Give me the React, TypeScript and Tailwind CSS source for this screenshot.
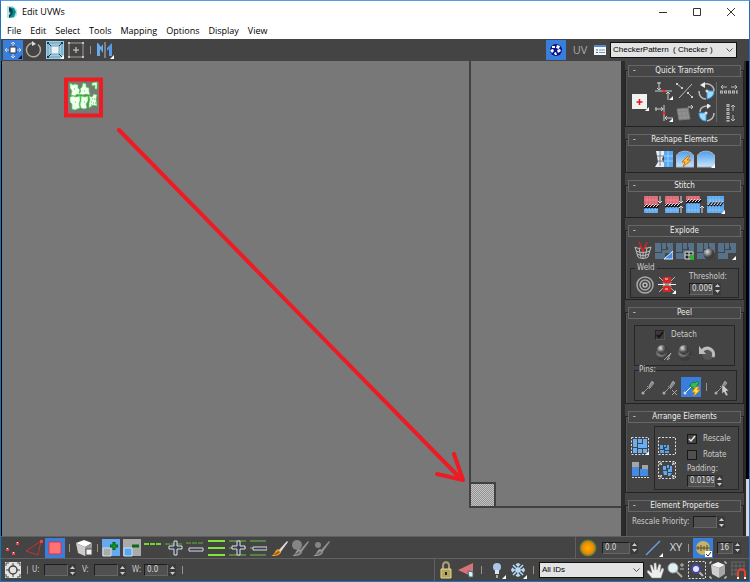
import type { ReactNode } from "react";

type IconProps = { children: ReactNode; w?: number; h?: number };

function Icon({ children, w = 18, h = 18 }: IconProps) {
  return (
    <svg width={w} height={h} viewBox={`0 0 ${w} ${h}`} fill="none" className="block" aria-hidden="true">
      {children}
    </svg>
  );
}

function Tool({ label, children, active = false }: { label: string; children: ReactNode; active?: boolean }) {
  return (
    <button
      type="button"
      aria-label={label}
      className={
        active
          ? "flex size-5 shrink-0 items-center justify-center bg-[#3a7edb]"
          : "flex size-5 shrink-0 items-center justify-center"
      }
    >
      {children}
    </button>
  );
}

function Sep() {
  return <span className="block h-2 w-px shrink-0 bg-[#99938c]" />;
}

// white triangle that marks a flyout button
const Fly = () => <path d="M18 14v4h-4z" fill="#fff" />;

function Field({ label, value, id, width = "w-6" }: { label: string; value: string; id: string; width?: string }) {
  return (
    <div className="flex shrink-0 items-center">
      <input
        id={id}
        aria-label={label}
        defaultValue={value}
        className={`${width} h-3 border border-[#1d1d1d] border-r-[#666] border-b-[#666] bg-[#505050] pl-0.5 text-[8px] text-[#ddd] outline-none`}
      />
      <span className="flex w-2 flex-col bg-[#3a3a3a]">
        <button type="button" aria-label={`${label} up`} className="flex h-1.5 items-center justify-center">
          <svg width="5" height="3" viewBox="0 0 5 3"><path d="M0 3 2.500 0 5 3z" fill="#ccc" /></svg>
        </button>
        <button type="button" aria-label={`${label} down`} className="flex h-1.5 items-center justify-center">
          <svg width="5" height="3" viewBox="0 0 5 3"><path d="M0 0 2.500 3 5 0z" fill="#ccc" /></svg>
        </button>
      </span>
    </div>
  );
}

function Dropdown({ label, value, width }: { label: string; value: string; width: string }) {
  return (
    <div className={`relative shrink-0 ${width}`}>
      <select
        aria-label={label}
        className="block h-4 w-full appearance-none border border-[#111] bg-[#e3e3e3] pl-0.5 font-['Liberation_Sans',sans-serif] text-[8px] text-black outline-none"
      >
        <option>{value}</option>
      </select>
      <svg className="pointer-events-none absolute top-1.5 right-1" width="7" height="5" viewBox="0 0 7 5" fill="none">
        <path d="m.5.5 3 3 3-3" stroke="#555" />
      </svg>
    </div>
  );
}

function Group({ title, children }: { title: string; children: ReactNode }) {
  return (
    <section className="shrink-0 border border-[#222] shadow-[inset_1px_1px_#555]">
      <h2 className="relative mx-0.5 -mt-1.5 h-3 border border-[#666] bg-[#464646] text-center text-[8px] leading-[10px] text-[#eee]">
        <span className="absolute left-1">-</span>
        {title}
      </h2>
      {children}
    </section>
  );
}

/* ---------- canvas ---------- */

function Canvas() {
  return (
    <svg
      className="block h-full w-full"
      viewBox="0 0 619 475"
      preserveAspectRatio="xMinYMin slice"
      fill="none"
      role="img"
      aria-label="UV canvas"
    >
      <defs>
        <pattern id="checker" width="2" height="2" patternUnits="userSpaceOnUse">
          <rect width="2" height="2" fill="#c4c4c4" />
          <path d="M0 0h1v1H0zM1 1h1v1H1z" fill="#929292" />
        </pattern>
      </defs>
      <path d="M468 0v446h152" stroke="#414141" strokeWidth="2" />
      <rect x="468" y="422" width="25" height="24" fill="url(#checker)" stroke="#414141" strokeWidth="2" />

      <g fill="#f4fff4" stroke="#3be83b" strokeWidth=".7">
        <path d="m68 22 3 2 2-1 3 1v3l2 2-1 2 1 3-3-1-2 2-4-1 1-4-2-3z" />
        <path d="m78 28 2-2 1-4 3 1v3l3 1v3l1 4-4-1-3 1-4-1 2-3z" />
        <path d="m90 22 5-1v7h-2v-4l-3 1z" />
        <path d="m68 36 3-1 3 1 4-1v5l-1 3 1 4-3 1-2 1-3-1v-5l-2-2z" />
        <path d="m79 35 4 1 3-1v5l-2 3 1 4-3 1-3-1-1-4 1-3z" />
        <path d="m87 35 3 1 2-3 3 1-1 4 1 7-4-1-4 3v-5l1-3z" />
      </g>
      <path d="M89 41h1M92 38h1M89 44h1M91 42h1M90 38h1M93 42h1M73 41h1M82 41h1M72 28h1M82 30h1" stroke="#35d435" />

      <rect x="64" y="18.500" width="35" height="36" stroke="#ed1c24" strokeWidth="4" />
      <path d="M117 69 459 418M435 413l26 6-9-26" stroke="#ed1c24" strokeWidth="4" strokeLinecap="round" strokeLinejoin="round" />
    </svg>
  );
}

/* ---------- shared drawings ---------- */

function Blocks({ corner }: { corner?: ReactNode }) {
  return (
    <Icon>
      <path d="M0 1h6v9H0zM7 1h4v6H7zM12 1h6v10h-6V8h1V5h-1zM7 8h6v3H7zM0 11h10v6H0z" fill="#56728b" />
      {corner}
    </Icon>
  );
}

function Stitch({ variant }: { variant: number }) {
  const red = variant === 1 ? 9 : variant === 2 ? 8 : variant === 3 ? 4 : 0;
  const width = variant === 4 ? 17 : 14;
  return (
    <Icon>
      <path d={`M0 0h${width}v${red}H0z`} fill="#dc6472" />
      <path d={`M0 ${red + (red ? 3 : 0)}h${width}V17H0z`} fill="#5ba7ef" />
      <path d={`M0 ${red}h${width}v3H0z`} fill={red ? "#392e34" : "#5ba7ef"} />
      <path d={`M3 0v17M6 0v17M9 0v17M12 0v17M0 4h${width}M0 14h${width}`} stroke="#ffffff35" />
      <path
        d={variant === 4 ? "m1 10 3-4m0 4 3-4m0 4 3-4m0 4 3-4m0 4 3-4" : `M0 ${red + 3}l3-3m0 3 3-3m0 3 3-3m0 3 3-3m0 3 3-3`}
        stroke="#111"
        strokeWidth="2"
      />
      <path
        d={variant === 4 ? "m1 9 3-4m0 4 3-4m0 4 3-4m0 4 3-4m0 4 3-4" : `M0 ${red + 2}l3-3m0 3 3-3m0 3 3-3m0 3 3-3m0 3 3-3`}
        stroke="#f8dce0"
      />
      {variant < 3 && <path d="M16 0v7m-2-2 2 2 2-2" stroke="#ddd" />}
      {(variant === 2 || variant === 3) && <path d="M16 17v-7m-2 2 2-2 2 2" stroke="#ddd" />}
      {variant === 4 && <Fly />}
    </Icon>
  );
}

function Pin({ children }: { children?: ReactNode }) {
  return (
    <Icon>
      <path d="m3 15 7-7" stroke="#999" />
      <circle cx="3" cy="15" r="1.500" fill="#aaa" />
      <path d="m7 8 3 3M9 8l4-4M12 3l2 2-4 5-1-2z" stroke="#999" fill="#858585" />
      {children}
    </Icon>
  );
}

function Cube() {
  return (
    <Icon>
      <path d="m2 4 7-3 7 3-6 3z" fill="#f4f4f4" />
      <path d="m2 4 8 3v10l-7-4z" fill="#cfcfcf" />
      <path d="m10 7 6-3v9l-6 4z" fill="#a6a6a6" />
      <path d="M1 3V1h2M15 1h2v2M1 15v2h2M15 17h2v-2" stroke="#ddd" />
    </Icon>
  );
}

function Plus({ x = 9 }: { x?: number }) {
  return <path d={`M${x - 2} 2h3v5h5v3h-5v6h-3v-6h-5V7h5z`} fill="#374154" stroke="#e2e2e2" />;
}

function Head({ arrow = false }: { arrow?: boolean }) {
  return (
    <Icon>
      <circle cx="9" cy="10" r="7" fill="url(#sphere)" />
      <circle cx="8" cy="6" r="5" fill="url(#sphere)" />
      <path d="M3 9c3-2 6-2 8 1s3 3 5 2M9 3l2 4" stroke="#555" />
      {arrow && <path d="m10 16 7-7-4 7 3-2" stroke="#aaa" />}
    </Icon>
  );
}

function Brush({ blob = 0 }: { blob?: number }) {
  return (
    <Icon>
      {blob > 0 && <circle cx="6" cy="6" r={blob} fill="#858585" />}
      <path d="m17 2-9 10 2 2 8-11z" fill={blob ? "#8e8e8e" : "#ded7ce"} />
      <path d="m8 10 3 3c-1 4-6 4-10 4 4-1 3-5 7-7z" fill={blob ? "#a0a0a0" : "#f3a32a"} />
      <path d="M3 16c4 0 6-1 7-3l-2-1z" fill={blob ? "#696969" : "#a65e0f"} />
    </Icon>
  );
}

function Marquee() {
  return <path d="M.5.5h17v17H.5z" stroke="#ddd" strokeDasharray="2 1.500" />;
}

const menus = ["File", "Edit", "Select", "Tools", "Mapping", "Options", "Display", "View"];

export default function App() {
  return (
    <div className="flex h-screen flex-col overflow-hidden border border-[#1874bc] border-t-[#569de5] bg-[#444] font-['DejaVu_Sans_Condensed','DejaVu_Sans',sans-serif] text-[8px] text-[#ccc]">
      <svg width="0" height="0" className="absolute">
        <defs>
          <radialGradient id="sphere" cx="35%" cy="30%">
            <stop stopColor="#ddd" />
            <stop offset="1" stopColor="#3c3c3c" />
          </radialGradient>
          <linearGradient id="sky" x2="0" y2="1">
            <stop stopColor="#4c9eed" />
            <stop offset="1" stopColor="#cbe4fa" />
          </linearGradient>
          <radialGradient id="sun">
            <stop stopColor="#ffae00" />
            <stop offset=".6" stopColor="#f08a00" />
            <stop offset=".8" stopColor="#838b28" />
            <stop offset="1" stopColor="#444" />
          </radialGradient>
        </defs>
      </svg>

      <header className="shrink-0 bg-white font-['Open_Sans',sans-serif] text-[9px] text-black">
        <div className="flex h-[21px] items-center pl-1.5">
          <Icon w={10} h={12}>
            <path d="M0 0h6l4 4v5l-3 3H0z" fill="#b7e5e5" />
            <path d="m2 1 5 1 2 4-2 5-5 1 2-4-2-2 2-2z" fill="#07908e" />
            <path d="m2 1 3 2 1 3-2 1-2-2zM2 12l4-5-1-1-3 3z" fill="#053f50" />
          </Icon>
          <h1 className="ml-[5px]">Edit UVWs</h1>
          <div className="ml-auto flex gap-[14px] pr-2">
            <button type="button" aria-label="Minimize" className="flex size-5 items-center justify-center">
              <Icon w={8} h={8}><path d="M0 4.500h8" stroke="#333" /></Icon>
            </button>
            <button type="button" aria-label="Maximize" className="flex size-5 items-center justify-center">
              <Icon w={8} h={8}><path d="M.5.5h7v7h-7z" stroke="#333" /></Icon>
            </button>
            <button type="button" aria-label="Close" className="flex size-5 items-center justify-center">
              <Icon w={8} h={8}><path d="m0 0 8 8M8 0 0 8" stroke="#333" /></Icon>
            </button>
          </div>
        </div>
        <nav className="flex h-[17px] items-center gap-[9px] pl-1.5">
          {menus.map((menu) => (
            <button key={menu} type="button">{menu}</button>
          ))}
        </nav>
      </header>

      <div className="flex h-[22px] shrink-0 items-center gap-px pl-0.5">
        <Tool label="Move" active>
          <Icon>
            <path d="M9 1v4M7 3l2-2 2 2M9 17v-4m-2 2 2 2 2-2M1 9h4M3 7 1 9l2 2M17 9h-4m2-2 2 2-2 2" stroke="#cfdcf0" />
            <path d="M6 6h6v6H6z" fill="#fff" stroke="#333" />
            <path d="M18 14v4h-4z" fill="#111" />
          </Icon>
        </Tool>
        <Tool label="Rotate">
          <Icon>
            <path d="M13 3.500a7 7 0 1 1-6-1.500" stroke="#b0aaa2" strokeWidth="1.500" />
            <path d="m7 0 4 3-4 2z" fill="#ddd" />
          </Icon>
        </Tool>
        <Tool label="Scale">
          <Icon>
            <path d="M0 0h18v18H0z" fill="#9bd0ed" />
            <path d="m1 1 4 4M17 1l-4 4M1 17l4-4M17 17l-4-4" stroke="#143849" />
            <path d="M1 1h2v2H1zM15 1h2v2h-2zM1 15h2v2H1z" fill="#173b4c" />
            <path d="M3 2h12M3 16h11M2 3v12M16 3v11" stroke="#6d97aa" />
            <path d="M5 5h8v8H5z" fill="#eaf1f5" stroke="#7f9eaa" />
            <Fly />
          </Icon>
        </Tool>
        <Tool label="Freeform">
          <Icon>
            <path d="M2 2h14v14H2z" stroke="#a79a91" />
            <path d="M1 1h2v2H1zM15 1h2v2h-2zM1 15h2v2H1zM15 15h2v2h-2z" fill="#cbc4bd" />
            <path d="M9 6v6M6 9h6" stroke="#ded9d4" />
          </Icon>
        </Tool>
        <span className="mx-[3px]"><Sep /></span>
        <Tool label="Mirror">
          <Icon>
            <path d="M1 2v13h3V8l3 4V3L5 6 2 2z" fill="#67aaf0" />
            <path d="M9 1v16" stroke="#bbb" />
            <path d="m16 2-5 5v3l2-2v7h3V2z" fill="#579ce8" />
            <Fly />
          </Icon>
        </Tool>
        <div className="ml-auto flex items-center pr-3">
          <Tool label="Show map" active>
            <Icon>
              <circle cx="9" cy="9" r="6" fill="#06148c" />
              <path d="M5 5h3v2H5zM10 4l3 1-1 3-3-1zM3 9l3-1 1 2-2 2zM10 9l3-1 1 2-3 2zM7 12l2-1 1 3H8z" fill="#fff" />
            </Icon>
          </Tool>
          <button type="button" className="ml-1 w-5 font-['Open_Sans',sans-serif] text-[11px] text-[#aaa]">UV</button>
          <Tool label="Properties">
            <Icon w={12} h={12}>
              <path d="M0 1h12v10H0z" fill="#f4f6fa" />
              <path d="M0 1h12v2H0z" fill="#5589c8" />
              <path d="M2 6h2M2 8.500h2" stroke="#2471d0" />
              <path d="M5 6h6M5 8.500h6" stroke="#8293a7" />
            </Icon>
          </Tool>
          <Dropdown label="Texture" value={"CheckerPattern\u00a0\u00a0( Checker )"} width="w-[127px]" />
        </div>
      </div>

      <div className="flex min-h-0 flex-1">
        <main className="min-w-0 flex-1 border-l border-black bg-[#787878]">
          <Canvas />
        </main>

        <aside className="flex w-[125px] shrink-0 flex-col gap-3 overflow-hidden border-r-2 border-l-4 border-[#2b2b2b] bg-[#444] pt-[9px]">
          <Group title="Quick Transform">
            <div className="flex h-[49px] items-center gap-1 pl-1">
              <Tool label="Align to pivot">
                <Icon>
                  <path d="M1 1h15v15H1z" fill="#f1f1f1" />
                  <path d="M8.500 6v6M5.500 9h6" stroke="#e11" strokeWidth="1.500" />
                  <Fly />
                </Icon>
              </Tool>
              <div className="grid grid-cols-3 gap-x-px gap-y-0.5">
                <Tool label="Align horizontal">
                  <Icon>
                    <path d="M0 9h17M4 0v8M2 6l2 2 2-2M13 18v-8m-2 2 2-2 2 2M2 1h4" stroke="#ccc" />
                    <circle cx="9" cy="9" r="1.500" fill="#f22" />
                    <Fly />
                  </Icon>
                </Tool>
                <Tool label="Linear align">
                  <Icon>
                    <path d="M3 16 16 2M1 2l5 4M12 11l4 4" stroke="#bbb" />
                    <path d="M0 1h2v2H0zM5 5h2v2H5zM11 10h2v2h-2zM15 14h2v2h-2z" fill="#ccc" />
                  </Icon>
                </Tool>
                <Tool label="Rotate 90">
                  <Icon>
                    <path d="M10 9h7c0 5-3 7-7 8z" fill="#9bdcff" stroke="#3f9ce0" />
                    <path d="M5 3c5-3 12 0 12 6M2 9c0 5 3 8 7 8" stroke="#bbb" strokeWidth="1.500" />
                    <path d="M8 0 3 3l5 3z" fill="#eee" />
                    <circle cx="10" cy="9" r="1.500" fill="#ddd" />
                  </Icon>
                </Tool>
                <Tool label="Align vertical">
                  <Icon>
                    <path d="M9 1v16M0 5h8M6 3l2 2-2 2M18 14h-8m2-2-2 2 2 2M1 3v4" stroke="#ccc" />
                    <circle cx="9" cy="9" r="1.500" fill="#f22" />
                    <Fly />
                  </Icon>
                </Tool>
                <Tool label="Align to edge">
                  <Icon>
                    <path d="m1 5 11-1 2 11-11 1z" fill="#929292" stroke="#777" />
                    <path d="M12 3h5m-2-2 2 2-2 2" stroke="#ccc" />
                    <path d="m2 8 10-1M3 12l10-1M5 5l2 10M9 5l2 10" stroke="#858585" />
                  </Icon>
                </Tool>
                <Tool label="Rotate -90">
                  <Icon>
                    <path d="M2 9h7v8C5 17 2 14 2 9z" fill="#9bdcff" stroke="#3f9ce0" />
                    <path d="M3 8c0-4 3-6 8-6M17 9c0 5-3 7-7 8" stroke="#bbb" strokeWidth="1.500" />
                    <path d="m10-1 4 3-4 3z" fill="#eee" />
                    <circle cx="9" cy="9" r="1.500" fill="#ddd" />
                  </Icon>
                </Tool>
              </div>
              <span className="-ml-1 h-10 w-px bg-[#666]" />
              <div className="-ml-0.5 flex flex-col gap-0.5">
                <Tool label="Space horizontally">
                  <Icon>
                    <path d="M1 5h6M3 3 1 5l2 2M17 5h-6m4-2 2 2-2 2" stroke="#bbb" />
                    <path d="M0 10h18" stroke="#bbb" strokeWidth="3" strokeDasharray="3 1" />
                    <path d="M1 10h17" stroke="#444" strokeDasharray="1 3" />
                  </Icon>
                </Tool>
                <Tool label="Space vertically">
                  <Icon>
                    <path d="M13 1v6m-2-4 2-2 2 2M13 17v-6m-2 4 2 2 2-2" stroke="#bbb" />
                    <path d="M8 0v18" stroke="#bbb" strokeWidth="3" strokeDasharray="3 1" />
                    <path d="M8 1v17" stroke="#444" strokeDasharray="1 3" />
                  </Icon>
                </Tool>
              </div>
            </div>
          </Group>

          <Group title="Reshape Elements">
            <div className="flex h-[26px] items-center justify-center gap-px">
              <Tool label="Straighten">
                <Icon>
                  <path d="M1 1h8v4L7 9l2 4v4H0l3-5-1-6z" fill="#e6edf3" />
                  <path d="M9 1h9v16H9z" fill="#57a8f5" />
                  <path d="M2 6h7M3 11h6M5 1v15" stroke="#71808c" />
                  <path d="M9 6h9M9 11h9M13 1v16" stroke="#9fd0ff" />
                </Icon>
              </Tool>
              <Tool label="Relax until flat">
                <Icon>
                  <path d="M0 17V8c0-9 18-9 18 0v9z" fill="url(#sky)" stroke="#b0b7bf" />
                  <path d="m12 6-6 6h3l-2 5 8-7h-4l3-4z" fill="#ffc63a" stroke="#d66f12" />
                </Icon>
              </Tool>
              <Tool label="Relax">
                <Icon>
                  <path d="M0 17V8c0-9 18-9 18 0v9z" fill="url(#sky)" stroke="#b0b7bf" />
                  <Fly />
                </Icon>
              </Tool>
            </div>
          </Group>

          <Group title="Stitch">
            <div className="flex h-[25px] items-center justify-center gap-px">
              <Tool label="Stitch to target"><Stitch variant={1} /></Tool>
              <Tool label="Stitch to average"><Stitch variant={2} /></Tool>
              <Tool label="Stitch to source"><Stitch variant={3} /></Tool>
              <Tool label="Stitch custom"><Stitch variant={4} /></Tool>
            </div>
          </Group>

          <Group title="Explode">
            <div className="flex h-[27px] items-center justify-center gap-px">
              <Tool label="Break">
                <Icon>
                  <path d="M1 5c3 2 5 1 7 1M10 6c3 0 4 0 7-1M1 5l3 10c3 2 7 2 10 0l3-10M2 9c5 2 9 2 14 0M3 12c4 2 8 2 12 0M5 6l2 10M13 6l-2 10M9 7v10" stroke="#bbb" />
                  <path d="m5 0 4 9 4-9" stroke="#e02020" strokeWidth="1.500" />
                </Icon>
              </Tool>
              <Tool label="Flatten by polygon angle">
                <Blocks corner={<path d="M9 17h9V9z" fill="#3c8df0" stroke="#eee" />} />
              </Tool>
              <Tool label="Flatten by smoothing group">
                <Blocks corner={<><path d="M9 10h8v7H9z" fill="#222" stroke="#ddd" /><path d="M13 10v7M9 13h8" stroke="#ddd" /><path d="M14 13h4v5h-4z" fill="#29b429" /></>} />
              </Tool>
              <Tool label="Flatten by material">
                <Blocks corner={<circle cx="12" cy="12" r="5.500" fill="url(#sphere)" />} />
              </Tool>
              <Tool label="Flatten custom"><Blocks corner={<Fly />} /></Tool>
            </div>
            <fieldset className="mx-1 mb-px border border-[#272727] px-1">
              <legend className="px-0.5 leading-[8px]">Weld</legend>
              <div className="flex h-[25px] items-center gap-0.5">
                <Tool label="Target weld">
                  <Icon>
                    <circle cx="9" cy="9" r="8" stroke="#aaa" strokeWidth="1.500" />
                    <circle cx="9" cy="9" r="5" stroke="#aaa" strokeWidth="1.500" />
                    <circle cx="9" cy="9" r="2" stroke="#bbb" strokeWidth="1.500" />
                  </Icon>
                </Tool>
                <Tool label="Weld selected">
                  <Icon>
                    <path d="m1 1 16 15M17 1 1 16" stroke="#bbb" />
                    <path d="M5 1h8v6H5zM5 10h8v6H5z" fill="#d22" />
                    <path d="M0 8.500h7m-2-2 2 2-2 2M18 8.500h-7m2-2-2 2 2 2" stroke="#eee" />
                    <path d="M7 3h3M7 13h3" stroke="#eee" />
                    <Fly />
                  </Icon>
                </Tool>
                <div className="ml-2.5 -mt-1">
                  <label htmlFor="threshold" className="block leading-3">Threshold:</label>
                  <Field id="threshold" label="Threshold" value="0.0095" />
                </div>
              </div>
            </fieldset>
          </Group>

          <Group title="Peel">
            <div className="px-2 pt-1.5 pb-0.5">
              <div className="h-[41px] border border-[#272727] pt-[3px]">
                <label className="flex items-center gap-1.5 pl-5 leading-3">
                  <input type="checkbox" defaultChecked className="peer sr-only" />
                  <span className="flex size-2.5 items-center justify-center border border-[#222] border-r-[#555] border-b-[#555] bg-[#3b3b3b]">
                    <Icon w={8} h={8}><path d="m1 4 2 2 4-5" stroke="#151515" strokeWidth="2" /></Icon>
                  </span>
                  Detach
                </label>
                <div className="flex items-center justify-center gap-0.5 pt-0.5">
                  <Tool label="Quick peel"><Head arrow /></Tool>
                  <Tool label="Peel mode"><Head /></Tool>
                  <Tool label="Reset peel">
                    <Icon>
                      <circle cx="10" cy="10" r="6" fill="#555" />
                      <path d="M4 7c5-6 14-1 11 6" stroke="#bdbdbd" strokeWidth="3" />
                      <path d="M1 2v8h7z" fill="#bbb" />
                    </Icon>
                  </Tool>
                </div>
              </div>
              <fieldset className="border border-[#272727] px-1">
                <legend className="leading-[8px]">Pins:</legend>
                <div className="flex h-[26px] items-center gap-px">
                  <Tool label="Pin"><Pin /></Tool>
                  <Tool label="Unpin"><Pin><path d="m11 12 5 5M16 12l-5 5" stroke="#aaa" /></Pin></Tool>
                  <Tool label="Auto pin" active>
                    <Icon>
                      <path d="m3 15 7-7" stroke="#fff" />
                      <circle cx="3" cy="15" r="1.500" fill="#ddd" />
                      <path d="m7 7 6 5M8 7l3-3 2 1 2-2 2 2-2 2v3l-3 2z" fill="#37b95b" stroke="#16833c" />
                      <path d="m14 9-4 5h3l-1 4 6-6h-3l2-3z" fill="#ffe244" stroke="#e18c08" />
                    </Icon>
                  </Tool>
                  <span className="mx-1"><Sep /></span>
                  <Tool label="Select pins">
                    <Pin><path d="M9 6v10l2-2 2 4 2-1-2-4h3z" fill="#ccc" stroke="#444" strokeWidth=".5" /></Pin>
                  </Tool>
                </div>
              </fieldset>
            </div>
          </Group>

          <Group title="Arrange Elements">
            <div className="flex gap-1 px-1 pt-[3px] pb-0.5">
              <div className="flex flex-col justify-center gap-1">
                <Tool label="Pack custom">
                  <Icon>
                    <Marquee />
                    <path d="M2 2h4v8H2zM7 2h4v4H7zM12 2h4v9H7V7h5zM2 11h4v5H2zM7 12h4v4H7zM12 12h4v4h-4z" fill="#69aef2" />
                    <Fly />
                  </Icon>
                </Tool>
                <Tool label="Rescale elements">
                  <Icon>
                    <path d="M1 1h7v6H1zM11 4h6v4h-6z" fill="#a5a5a5" />
                    <path d="M1 6h7v9H1zM9 8h8v7H9z" fill="#438be3" />
                    <path d="M1 16.500h17" stroke="#ddd" strokeDasharray="2 1" />
                  </Icon>
                </Tool>
              </div>
              <div className="flex h-[64px] min-w-0 flex-1 border border-[#272727] pl-0.5">
                <div className="flex flex-col justify-center gap-1">
                  <Tool label="Pack together">
                    <Icon>
                      <Marquee />
                      <path d="M2 8h3v4H2zM6 8h2v2H6zM9 8h2v5H7v-2h2zM2 13h4v3H2zM7 14h4v2H7z" fill="#55a4f3" />
                    </Icon>
                  </Tool>
                  <Tool label="Pack normalize">
                    <Icon>
                      <Marquee />
                      <path d="M5 5h3v4H5zM9 4h2v3H9zM12 5h2v6h-4V8h2zM5 10h4v4H6zM10 12h4l-2 3h-2z" fill="#60a8ef" />
                      <path d="m4 4-2-2m0 2V2h2M14 4l2-2m-2 0h2v2M4 14l-2 2m0-2v2h2M14 14l2 2m-2 0h2v-2" stroke="#ddd" />
                    </Icon>
                  </Tool>
                </div>
                <div className="ml-2.5 pt-1">
                  <label className="flex h-4 items-center gap-1.5">
                    <input type="checkbox" defaultChecked className="peer sr-only" />
                    <span className="flex size-2.5 items-center justify-center border border-[#181818] bg-[#444]">
                      <Icon w={8} h={8}><path d="m1 4 2 2 4-5" stroke="#eee" strokeWidth="1.500" /></Icon>
                    </span>
                    Rescale
                  </label>
                  <label className="flex h-4 items-center gap-1.5">
                    <input type="checkbox" className="peer sr-only" />
                    <span className="size-2.5 border border-[#181818] bg-[#505050]" />
                    Rotate
                  </label>
                  <label htmlFor="padding" className="block leading-3">Padding:</label>
                  <Field id="padding" label="Padding" value="0.0199" width="w-7" />
                </div>
              </div>
            </div>
          </Group>

          <Group title="Element Properties">
            <div className="flex h-[30px] items-start gap-1 pt-1 pl-1.5">
              <label htmlFor="priority" className="leading-3 whitespace-nowrap">Rescale Priority:</label>
              <Field id="priority" label="Rescale Priority" value="" />
            </div>
          </Group>
        </aside>
        <div className="flex w-[3px] shrink-0 flex-col justify-end bg-black">
          <span className="h-[12%] bg-[#d8d8d8]" />
        </div>
      </div>

      <footer className="shrink-0 border-t border-[#606060]">
        <div className="flex h-[22px] items-center border-b border-[#606060] pl-0.5">
          <div className="flex items-center gap-px">
            <Tool label="Vertex">
              <Icon>
                <path d="M2 9h3v3H2zM8 13h3v3H8zM12 3h3v3h-3z" fill="#f04450" />
                <path d="M3 9h1v1H3zM9 13h1v1H9zM13 3h1v1h-1z" fill="#fff" />
              </Icon>
            </Tool>
            <Tool label="Edge">
              <Icon><path d="m16 2-3 14L1 12z" stroke="#c92f38" /><path d="M15 1h3v3h-3z" fill="#e44" /></Icon>
            </Tool>
            <Tool label="Polygon" active>
              <Icon><path d="M3 3h12v12H3z" fill="#ff7376" stroke="#d63444" /></Icon>
            </Tool>
            <span className="mx-[3px]"><Sep /></span>
            <Tool label="Element">
              <Icon>
                <path d="m1 4 8-3 8 3-7 4z" fill="#fff" />
                <path d="m1 4 9 4v9l-7-3z" fill="#ccc" />
                <path d="m10 8 7-4v9l-7 4z" fill="#999" />
                <path d="M11 10h6v6h-6z" fill="#f1f1f1" stroke="#555" />
              </Icon>
            </Tool>
            <span className="mx-0.5"><Sep /></span>
            <Tool label="Grow">
              <Icon>
                <path d="M0 0h18v17H0z" fill="#65aaf0" />
                <path d="M1 9h8v8H1z" fill="#aaa" stroke="#ddd" />
                <path d="M12 3v8M8 7h8" stroke="#085c18" strokeWidth="3" />
                <path d="M12 4v6M9 7h6" stroke="#19ae27" />
              </Icon>
            </Tool>
            <Tool label="Shrink">
              <Icon>
                <path d="M0 0h18v17H0z" fill="#aaa" />
                <path d="M1 9h8v8H1z" fill="#58a8f4" stroke="#cce3fa" />
                <path d="M9 7h7" stroke="#086a18" strokeWidth="3" />
              </Icon>
            </Tool>
            <Tool label="Loop"><Icon><path d="M0 5h18" stroke="#73d52e" strokeWidth="2" strokeDasharray="5 1" /></Icon></Tool>
            <Tool label="Grow loop"><Icon><path d="M0 5h18" stroke="#4e7c3b" strokeWidth="2" strokeDasharray="5 1" /><Plus x={11} /></Icon></Tool>
            <Tool label="Shrink loop">
              <Icon><path d="M0 4h18" stroke="#4e7c3b" strokeWidth="2" strokeDasharray="5 1" /><path d="M3 9h14v3H3z" fill="#374154" stroke="#ddd" /></Icon>
            </Tool>
            <Tool label="Ring"><Icon><path d="M1 2h17M1 9h17M1 16h17" stroke="#83e539" strokeWidth="2" /></Icon></Tool>
            <Tool label="Grow ring"><Icon><path d="M1 2h17M1 9h17M1 16h17" stroke="#578344" strokeWidth="2" /><Plus x={11} /></Icon></Tool>
            <Tool label="Shrink ring">
              <Icon><path d="M1 2h16M1 9h16M1 16h16" stroke="#578344" strokeWidth="2" /><path d="M4 8h14v3H4z" fill="#374154" stroke="#ddd" /></Icon>
            </Tool>
            <Tool label="Paint select"><Brush /></Tool>
            <Tool label="Enlarge brush"><Brush blob={5} /></Tool>
            <Tool label="Shrink brush"><Brush blob={3} /></Tool>
          </div>
          <div className="ml-auto flex h-full items-center gap-1 border-l border-[#606060] pr-2 pl-0.5">
            <Tool label="Soft selection"><Icon><circle cx="9" cy="9" r="9" fill="url(#sun)" /></Icon></Tool>
            <Field id="falloff" label="Falloff" value="0.0" width="w-7" />
            <span className="ml-0.5"><Tool label="Falloff type"><Icon><path d="M1 16 15 2" stroke="#6f9be0" strokeWidth="1.500" /><Fly /></Icon></Tool></span>
            <button type="button" className="w-4 font-['Open_Sans',sans-serif] text-[11px] text-[#ddd]">XY</button>
            <Sep />
            <Tool label="Limit by edges" active>
              <Icon>
                <circle cx="9" cy="9" r="7" fill="#c6b36a" />
                <path d="M2 9h14M4 7v4M7 6v6M10 7v4M13 6v6" stroke="#554d31" />
                <path d="M11 12h7v6h-7z" fill="#fff" /><path d="m12 15 2 2 3-4" stroke="#333" />
              </Icon>
            </Tool>
            <Field id="edges" label="Edge limit" value="16" width="w-4" />
          </div>
        </div>

        <div className="flex h-[22px] items-center pl-0.5">
          <Tool label="Absolute transform">
            <Icon>
              <path d="M1 1h16v16H1z" fill="#e4e4e4" />
              <circle cx="9" cy="9" r="4" stroke="#444" strokeWidth="1.500" />
              <path d="M9 2v3M9 13v3M2 9h3M13 9h3M2 5V2h3M13 2h3v3M2 13v3h3M13 16h3v-3" stroke="#444" />
            </Icon>
          </Tool>
          <span className="mx-1"><Sep /></span>
          <div className="flex items-center gap-1.5">
            {[["U", ""], ["V", ""], ["W", "0.0"]].map(([axis, value]) => (
              <div key={axis} className="flex items-center gap-px">
                <label htmlFor={axis} className="w-[11px]">{axis}:</label>
                <Field id={axis} label={axis} value={value} />
              </div>
            ))}
            <Sep />
          </div>

          <div className="ml-auto flex h-full items-center gap-px border-l border-[#606060]">
            <Tool label="Lock selection">
              <Icon>
                <path d="M7 8V5c0-5 6-5 6 0v3" stroke="#aaa071" strokeWidth="2" />
                <path d="M5 8h10v9H5z" fill="#b6a65a" stroke="#e1d69a" />
                <path d="M10 11v3" stroke="#222" strokeWidth="2" />
              </Icon>
            </Tool>
            <Tool label="Filter faces">
              <Icon><path d="M16 2v14L1 9z" fill="#d67378" /><path d="m11 10 5 1v5h-4z" fill="#d9f5fa" stroke="#496877" /></Icon>
            </Tool>
            <span className="mx-1"><Sep /></span>
            <Tool label="Display">
              <Icon><circle cx="9" cy="6" r="4" fill="#a9c6e8" /><path d="M7 9h4v4H7z" fill="#dae5ee" /><path d="M9 14v3" stroke="#aaa" strokeWidth="2" /><Fly /></Icon>
            </Tool>
            <Tool label="Freeze">
              <Icon>
                <path d="M9 2v14M2 9h14M4 4l10 10M14 4 4 14M7 3l2 2 2-2M7 15l2-2 2 2M3 7l2 2-2 2M15 7l-2 2 2 2" stroke="#b7daf7" strokeWidth="1.500" />
                <Fly />
              </Icon>
            </Tool>
            <span className="mx-1"><Sep /></span>
            <Dropdown label="Material IDs" value="All IDs" width="w-[105px]" />
            <Tool label="Pan">
              <Icon><path d="m6 17-5-6 1-2 4 3-2-8h2l2 5V2h2l1 7 2-6 2 1-1 7 2-4 2 1-3 9z" fill="#eee" stroke="#888" strokeWidth=".5" /></Icon>
            </Tool>
            <Tool label="Zoom">
              <Icon><path d="m9 10 6 6" stroke="#b4aaa0" strokeWidth="2" /><circle cx="6" cy="7" r="5" fill="#e0f0f1" stroke="#9eaaab" /><path d="M15 2v4M13 4h4M13 8h4" stroke="#bbb" /></Icon>
            </Tool>
            <Tool label="Zoom region">
              <Icon><Marquee /><path d="m10 10 5 5" stroke="#bbb" strokeWidth="2" /><circle cx="8" cy="8" r="4" fill="#e3e3ff" stroke="#4844a5" strokeWidth="2" /></Icon>
            </Tool>
            <Tool label="Zoom extents"><Cube /></Tool>
            <Tool label="Snap">
              <Icon>
                <path d="M1 1h14M1 5h14M1 9h14M1 13h8M2 1v14M6 1v14M10 1v7M14 1v7" stroke="#666" />
                <path d="M8 17v-5c0-5 7-5 7 0v5" stroke="#e6432b" strokeWidth="2" /><path d="M7 17h2M14 17h2" stroke="#fff" strokeWidth="2" />
              </Icon>
            </Tool>
          </div>
        </div>
      </footer>
    </div>
  );
}
